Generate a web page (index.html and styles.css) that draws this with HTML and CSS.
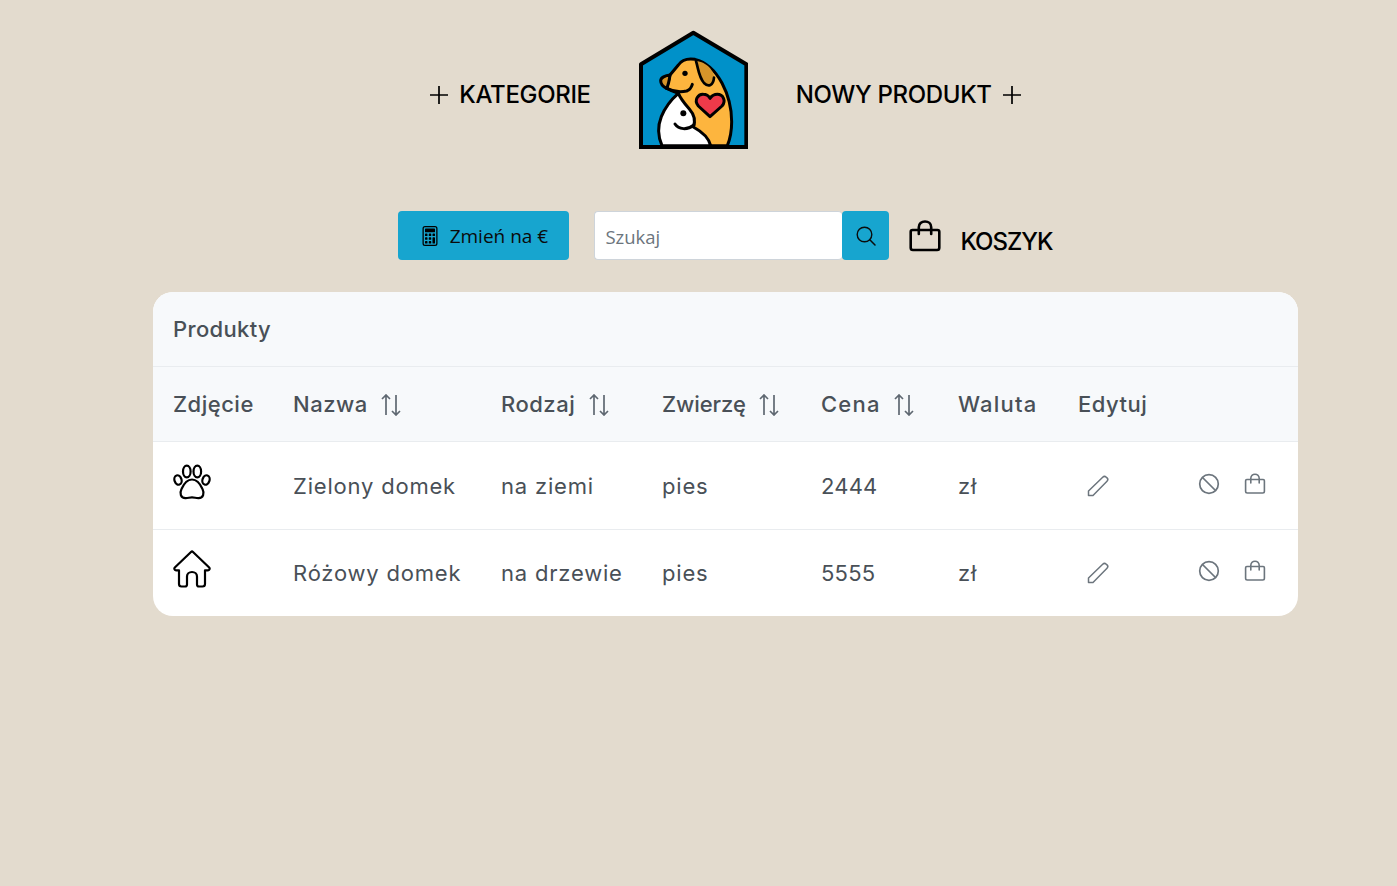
FILE: index.html
```html
<!DOCTYPE html>
<html lang="pl">
<head>
<meta charset="utf-8">
<title>Produkty</title>
<link rel="stylesheet" href="styles.css">
</head>
<body>
<svg class="sprites" width="0" height="0" aria-hidden="true">
  <symbol id="i-plus" viewBox="0 0 20 20"><path d="M10 1v18M1 10h18" fill="none" stroke="currentColor" stroke-width="1.7"/></symbol>
  <symbol id="i-sort" viewBox="0 0 22 22"><path d="M6 21V1M2 5 6 1l4 4M16 1v20M12 17l4 4 4-4" fill="none" stroke="currentColor" stroke-width="1.700"/></symbol>
  <symbol id="i-pencil" viewBox="0 0 22 22"><path d="M1.500 20.500V16L15.700 2.200c1-1 2.500-1 3.600 0l.7.700c1 1 1 2.400 0 3.400L6 20.500Z" fill="none" stroke="currentColor" stroke-width="1.500" stroke-linejoin="round"/></symbol>
  <symbol id="i-ban" viewBox="0 0 22 22"><circle cx="11" cy="11" r="9.300" fill="none" stroke="currentColor" stroke-width="1.700"/><path d="M4.500 4.500l13 13" stroke="currentColor" stroke-width="1.700"/></symbol>
  <symbol id="i-bag" viewBox="0 0 22 22"><path d="M2.800 6.500h16.400c.7 0 1.200.5 1.200 1.200v10.600c0 1-.8 1.700-1.700 1.700H3.300c-.9 0-1.700-.7-1.700-1.700V7.700c0-.7.500-1.200 1.200-1.200ZM6.800 10V5.600C6.800 3 8.700 1.200 11 1.200s4.200 1.800 4.200 4.400V10" fill="none" stroke="currentColor" stroke-width="1.600" stroke-linecap="round"/></symbol>
</svg>

<div class="page">
  <header class="top">
    <a class="top-link"><svg class="plus"><use href="#i-plus"/></svg><span>KATEGORIE</span></a>
    <svg class="logo" viewBox="27 15 327 357" role="img" aria-label="logo">
      <path d="M33 118 190 23 349 118V366H33Z" fill="#0091c9" stroke="#000" stroke-width="12" stroke-linejoin="round"/>
      <path d="M120 150 145 120C155 105 175 100 195 103 265 120 305 215 305 290 305 320 300 342 292 362H180L145 205C130 200 120 196 110 190Z" fill="#fdb53e" stroke="#000" stroke-width="9" stroke-linejoin="round"/>
      <path d="M198 108C230 110 254 140 252 158 250 182 235 187 222 174 206 155 206 135 198 108Z" fill="#d6952a"/>
      <path d="M198 108C206 135 206 155 222 174 235 187 250 182 252 158" fill="none" stroke="#000" stroke-width="8" stroke-linecap="round"/>
      <path d="M92 167C92 158 106 151 120 150 118 165 116 178 110 190 100 185 92 177 92 167Z" fill="#d6952a" stroke="#000" stroke-width="9" stroke-linejoin="round"/>
      <path d="M110 190C130 200 150 202 170 198 178 195 184 188 187 178" fill="none" stroke="#000" stroke-width="9" stroke-linecap="round"/>
      <path d="M145 205C152 222 164 236 178 252 192 268 197 288 190 306 212 318 236 336 242 362H96C84 335 82 305 94 275 104 250 122 225 145 205Z" fill="#fff" stroke="#000" stroke-width="9" stroke-linejoin="round"/>
      <path d="M135 297C146 314 172 316 192 300" fill="none" stroke="#000" stroke-width="9" stroke-linecap="round"/>
      <circle cx="165" cy="145" r="8"/>
      <circle cx="160" cy="265" r="9"/>
      <path d="M240 275 205 243C190 225 205 207 220 208 230 208 236 213 240 220 245 213 252 208 262 208 278 208 290 226 276 243Z" fill="#ee3a4a" stroke="#000" stroke-width="9" stroke-linejoin="round"/>
      <path d="M27 366H354" stroke="#000" stroke-width="12"/>
    </svg>
    <a class="top-link"><span>NOWY PRODUKT</span><svg class="plus"><use href="#i-plus"/></svg></a>
  </header>

  <div class="toolbar">
    <button class="btn-currency" type="button">
      <svg class="calc" viewBox="0 0 16 16"><path d="M12 1a1 1 0 0 1 1 1v12a1 1 0 0 1-1 1H4a1 1 0 0 1-1-1V2a1 1 0 0 1 1-1h8zM4 0a2 2 0 0 0-2 2v12a2 2 0 0 0 2 2h8a2 2 0 0 0 2-2V2a2 2 0 0 0-2-2H4z"/><path d="M4 2.500a.5.500 0 0 1 .5-.5h7a.5.500 0 0 1 .5.500v2a.5.500 0 0 1-.5.500h-7a.5.500 0 0 1-.5-.500v-2zm0 4a.5.500 0 0 1 .5-.5h1a.5.500 0 0 1 .5.500v1a.5.500 0 0 1-.5.500h-1a.5.500 0 0 1-.5-.500v-1zm0 3a.5.500 0 0 1 .5-.5h1a.5.500 0 0 1 .5.500v1a.5.500 0 0 1-.5.500h-1a.5.500 0 0 1-.5-.500v-1zm0 3a.5.500 0 0 1 .5-.5h1a.5.500 0 0 1 .5.500v1a.5.500 0 0 1-.5.500h-1a.5.500 0 0 1-.5-.500v-1zm3-6a.5.500 0 0 1 .5-.5h1a.5.500 0 0 1 .5.500v1a.5.500 0 0 1-.5.500h-1a.5.500 0 0 1-.5-.500v-1zm0 3a.5.500 0 0 1 .5-.5h1a.5.500 0 0 1 .5.500v1a.5.500 0 0 1-.5.500h-1a.5.500 0 0 1-.5-.500v-1zm0 3a.5.500 0 0 1 .5-.5h1a.5.500 0 0 1 .5.500v1a.5.500 0 0 1-.5.500h-1a.5.500 0 0 1-.5-.500v-1zm3-6a.5.500 0 0 1 .5-.5h1a.5.500 0 0 1 .5.500v1a.5.500 0 0 1-.5.500h-1a.5.500 0 0 1-.5-.500v-1zm0 3a.5.500 0 0 1 .5-.5h1a.5.500 0 0 1 .5.500v4a.5.500 0 0 1-.5.500h-1a.5.500 0 0 1-.5-.500v-4z"/></svg>
      <span>Zmień na €</span>
    </button>
    <form class="search">
      <input class="search-input" type="text" placeholder="Szukaj">
      <button class="search-btn" type="button" aria-label="Szukaj">
        <svg viewBox="0 0 20 20"><circle cx="8.500" cy="8.500" r="7.300" fill="none" stroke="currentColor" stroke-width="1.400"/><path d="M13.800 13.800 19 19" stroke="currentColor" stroke-width="1.500" stroke-linecap="round"/></svg>
      </button>
    </form>
    <a class="cart"><svg class="cart-icon" viewBox="0 0 32 32"><path d="M3.500 10h25c1 0 1.800.8 1.800 1.800v16c0 1.300-1 2.200-2.200 2.200H3.900c-1.200 0-2.200-.9-2.200-2.200v-16c0-1 .8-1.800 1.800-1.800ZM9.800 14V7.200C9.800 3.800 12.500 1.500 16 1.500s6.200 2.300 6.200 5.700V14" fill="none" stroke="currentColor" stroke-width="2.600" stroke-linecap="round"/></svg><span>KOSZYK</span></a>
  </div>

  <section class="card">
    <h2 class="card-title">Produkty</h2>
    <table class="products">
      <colgroup>
        <col class="c-photo"><col class="c-name"><col class="c-type"><col class="c-animal"><col class="c-price"><col class="c-cur"><col class="c-edit"><col>
      </colgroup>
      <thead>
        <tr>
          <th>Zdjęcie</th>
          <th>Nazwa <svg class="sort"><use href="#i-sort"/></svg></th>
          <th>Rodzaj <svg class="sort"><use href="#i-sort"/></svg></th>
          <th><span class="tight">Zwierzę</span> <svg class="sort"><use href="#i-sort"/></svg></th>
          <th><span class="wide">Cena</span> <svg class="sort"><use href="#i-sort"/></svg></th>
          <th><span class="wide">Waluta</span></th>
          <th>Edytuj</th>
          <th></th>
        </tr>
      </thead>
      <tbody>
        <tr class="row-first">
          <td class="photo"><svg class="thumb" viewBox="0 0 38 35" fill="none" stroke="#000" stroke-width="2.200"><ellipse cx="5" cy="15.500" rx="3.500" ry="4.800" transform="rotate(-18 5 15.500)"/><ellipse cx="13.800" cy="7" rx="3.800" ry="5.800"/><ellipse cx="24.300" cy="7" rx="3.800" ry="5.800"/><ellipse cx="33" cy="15.500" rx="3.500" ry="4.800" transform="rotate(18 33 15.500)"/><path d="M19 15c5 0 8.500 5 10.500 9.500 2 4 1 9-4 9.200-2.500.1-4-.9-6.500-.9s-4 1-6.500.9c-5-.2-6-5.200-4-9.200C10.500 20 14 15 19 15Z" stroke-linejoin="round"/></svg></td>
          <td>Zielony domek</td><td>na ziemi</td><td>pies</td><td class="num">2444</td><td>zł</td>
          <td class="edit"><svg class="ico"><use href="#i-pencil"/></svg></td>
          <td class="actions"><div class="actions-in"><svg class="ico"><use href="#i-ban"/></svg><svg class="ico"><use href="#i-bag"/></svg></div></td>
        </tr>
        <tr class="row-last">
          <td class="photo"><svg class="thumb thumb-home" viewBox="0 0 38 38" fill="none" stroke="#000" stroke-width="2.200" stroke-linejoin="round" stroke-linecap="round"><path d="M18 2 1.800 17.500c-1 1.200-.2 2.800 1.300 2.800H6V34c0 1.500 1 2.500 2.500 2.500h3.500c1.200 0 2-.8 2-2v-8c0-2.500 2-4.500 5-4.500s5 2 5 4.500v8c0 1.200.8 2 2 2h3.500c1.500 0 2.500-1 2.500-2.500V20.300h2.900c1.500 0 2.300-1.600 1.300-2.800L20 2c-.6-.6-1.400-.6-2 0Z"/></svg></td>
          <td>Różowy domek</td><td>na drzewie</td><td>pies</td><td class="num">5555</td><td>zł</td>
          <td class="edit"><svg class="ico"><use href="#i-pencil"/></svg></td>
          <td class="actions"><div class="actions-in"><svg class="ico"><use href="#i-ban"/></svg><svg class="ico"><use href="#i-bag"/></svg></div></td>
        </tr>
      </tbody>
    </table>
  </section>
</div>
</body>
</html>
```

FILE: styles.css
```css
* { box-sizing: border-box; }

html, body { margin: 0; height: 100%; }

body {
  background: #e3dbce;
  color: #000;
  font-family: Inter, "Open Sans", sans-serif;
}

.sprites { position: absolute; }

.page { padding: 30px 99px 0 153px; }

/* top nav */
.top {
  display: flex;
  justify-content: center;
  align-items: center;
  gap: 48px;
  height: 119px;
}

.top-link {
  display: flex;
  align-items: center;
  gap: 10px;
  padding-top: 10px;
  font-size: 24px;
  font-weight: 500;
  letter-spacing: -.35px;
  white-space: nowrap;
}

.plus { width: 20px; height: 20px; }

.logo { width: 109px; height: 119px; display: block; }

/* toolbar */
.toolbar {
  display: flex;
  justify-content: center;
  margin-top: 62px;
  height: 49px;
}

.btn-currency {
  display: flex;
  align-items: center;
  justify-content: center;
  gap: 10px;
  width: 171px;
  height: 49px;
  border: 0;
  border-radius: 4px;
  background: #17a5cf;
  color: #0b0b0b;
  font: 400 19px "Open Sans", sans-serif;
  padding: 0;
}

.btn-currency span { margin-top: 1px; }

.calc { width: 20px; height: 20px; fill: #000; }

.search { display: flex; margin-left: 25px; }

.search-input {
  width: 248px;
  height: 49px;
  border: 1px solid #ced4da;
  border-right: 0;
  border-radius: 4px;
  background: #fff;
  padding: 2px 10px 0;
  font: 400 18.500px "Open Sans", sans-serif;
  outline: 0;
}

.search-input::placeholder { color: #6c757d; opacity: 1; }

.search-btn {
  width: 47px;
  height: 49px;
  border: 0;
  border-radius: 4px;
  background: #17a5cf;
  color: #0b0b0b;
  padding: 0;
  display: flex;
  align-items: center;
  justify-content: center;
}

.search-btn svg { width: 20px; height: 20px; }

.cart {
  display: flex;
  align-items: center;
  gap: 19px;
  margin-left: 20px;
  font-size: 24px;
  font-weight: 500;
  letter-spacing: -1px;
}

.cart-icon { width: 32px; height: 32px; margin-top: 1px; }
.cart span { margin-top: 11px; }

/* card */
.card {
  margin-top: 32px;
  background: #fff;
  border-radius: 20px;
  overflow: hidden;
  color: #495057;
}

.card-title {
  margin: 0;
  height: 75px;
  padding: 0 20px;
  display: flex;
  align-items: center;
  background: #f7f9fb;
  border-bottom: 1px solid #e9ecef;
  font-size: 22px;
  font-weight: 500;
  letter-spacing: .35px;
}

.products {
  width: 100%;
  table-layout: fixed;
  border-collapse: separate;
  border-spacing: 0;
}

.c-photo { width: 120px; }
.c-name { width: 208px; }
.c-type { width: 161px; }
.c-animal { width: 159px; }
.c-price { width: 137px; }
.c-cur { width: 120px; }
.c-edit { width: 120px; }

.products th {
  height: 75px;
  padding: 0 20px;
  background: #f7f9fb;
  border-bottom: 1px solid #e9ecef;
  text-align: left;
  font-size: 22px;
  font-weight: 500;
  letter-spacing: .5px;
  white-space: nowrap;
}

.tight { letter-spacing: -.05px; }
.wide { letter-spacing: 1.200px; }

.sort { width: 22px; height: 22px; margin-left: 6px; vertical-align: -4px; color: #5f6871; }

.products td {
  height: 87px;
  padding: 0 20px;
  font-size: 22px;
  font-weight: 400;
  letter-spacing: .8px;
  white-space: nowrap;
}

.products td.num { letter-spacing: .2px; }

.row-first td { height: 88px; border-bottom: 1px solid #e9ecef; }
.products .row-last td { height: 86px; }

.thumb { width: 38px; height: 36px; display: block; margin-top: -8px; }
.thumb-home { height: 38px; }

.ico { width: 22px; height: 22px; color: #6c757d; display: block; }

.products td.edit { padding-left: 29px; }

.products td.actions { padding: 0; }

.actions-in {
  display: flex;
  gap: 24px;
  margin: -4px 0 0 20px;
}
```
